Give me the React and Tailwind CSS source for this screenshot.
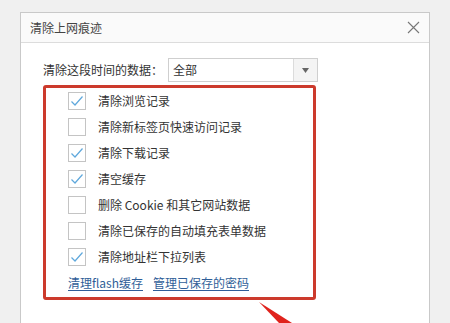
const FONT = { fontFamily: '"Microsoft YaHei", "Noto Sans CJK SC", "Liberation Sans", sans-serif' };

const items = [
  { label: "清除浏览记录", checked: true },
  { label: "清除新标签页快速访问记录", checked: false },
  { label: "清除下载记录", checked: true },
  { label: "清空缓存", checked: true },
  { label: "删除 Cookie 和其它网站数据", checked: false },
  { label: "清除已保存的自动填充表单数据", checked: false },
  { label: "清除地址栏下拉列表", checked: true },
];

const CheckBox = ({ checked }) => (
  <span className="flex h-[18px] w-[18px] shrink-0 items-center justify-center border border-[#c4c4c4] bg-white">
    {checked ? (
      <svg width="14" height="12" viewBox="0 0 14 12" fill="none">
        <path d="M1.5 6.5 L5 10 L12.5 1.5" stroke="#5fa8dc" strokeWidth="1.2" />
      </svg>
    ) : null}
  </span>
);

export default function App() {
  return (
    <div className="relative h-[323px] w-[450px] overflow-hidden bg-[#f0f0f0] pl-[20px] pt-[12px] text-[12px] text-[#333]" style={FONT}>
      <div className="h-[330px] w-[410px] border border-[#c9c9c9] bg-white">
        <div className="flex h-[30px] items-center justify-between border-b border-[#dcdcdc] bg-[#fafafa] pl-[9px] pr-[9px]">
          <span className="text-[#444]">清除上网痕迹</span>
          <svg width="13" height="13" viewBox="0 0 13 13">
            <path d="M1 1 L12 12 M12 1 L1 12" stroke="#777" strokeWidth="1.1" />
          </svg>
        </div>

        <div className="pl-[22px] pt-[15px]">
          <div className="flex h-[24px] items-center">
            <span className="w-[125px]">清除这段时间的数据：</span>
            <div className="flex h-[24px] w-[150px] border border-[#cfcfcf] bg-white">
              <span className="flex flex-1 items-center pl-[4px]">全部</span>
              <span className="flex w-[24px] items-center justify-center border-l border-[#dcdcdc] bg-[#f4f4f4]">
                <svg width="7" height="5" viewBox="0 0 7 5">
                  <path d="M0 0 L7 0 L3.5 5 Z" fill="#666" />
                </svg>
              </span>
            </div>
          </div>

          <div className="mt-[3px] w-[273px] rounded-[3px] border-[3px] border-[#cc3a2c] pb-[1px] pl-[22px]">
            {items.map((item) => (
              <div key={item.label} className="flex h-[26px] items-center gap-[12px]">
                <CheckBox checked={item.checked} />
                <span>{item.label}</span>
              </div>
            ))}
            <div className="flex h-[26px] items-center gap-[10px] text-[#2f5e98]">
              <span className="underline underline-offset-2">清理flash缓存</span>
              <span className="underline underline-offset-2">管理已保存的密码</span>
            </div>
          </div>
        </div>
      </div>

      <svg className="absolute left-0 top-0" width="450" height="323" viewBox="0 0 450 323">
        <polygon points="259,302 292,323 279,323" fill="#e0231d" />
      </svg>
    </div>
  );
}
